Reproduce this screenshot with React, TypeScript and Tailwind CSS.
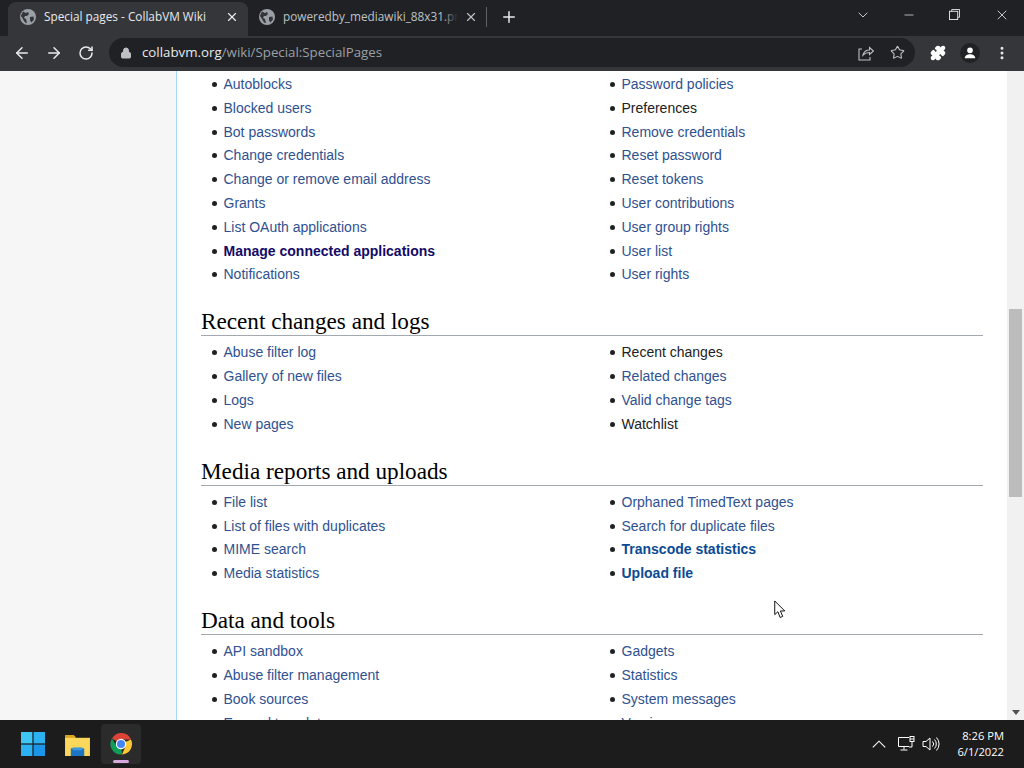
import React from 'react';
import { ArrowLeft, ArrowRight, RotateCw, Lock, Star, ChevronDown, Minus, X, Plus, MoreVertical, Puzzle } from 'lucide-react';

type Item = { label: string; kind?: 'plain' | 'bold' | 'visited' };

const sections: { title?: string; left: Item[]; right: Item[] }[] = [
  {
    left: [
      { label: 'Autoblocks' },
      { label: 'Blocked users' },
      { label: 'Bot passwords' },
      { label: 'Change credentials' },
      { label: 'Change or remove email address' },
      { label: 'Grants' },
      { label: 'List OAuth applications' },
      { label: 'Manage connected applications', kind: 'visited' },
      { label: 'Notifications' },
    ],
    right: [
      { label: 'Password policies' },
      { label: 'Preferences', kind: 'plain' },
      { label: 'Remove credentials' },
      { label: 'Reset password' },
      { label: 'Reset tokens' },
      { label: 'User contributions' },
      { label: 'User group rights' },
      { label: 'User list' },
      { label: 'User rights' },
    ],
  },
  {
    title: 'Recent changes and logs',
    left: [{ label: 'Abuse filter log' }, { label: 'Gallery of new files' }, { label: 'Logs' }, { label: 'New pages' }],
    right: [
      { label: 'Recent changes', kind: 'plain' },
      { label: 'Related changes' },
      { label: 'Valid change tags' },
      { label: 'Watchlist', kind: 'plain' },
    ],
  },
  {
    title: 'Media reports and uploads',
    left: [{ label: 'File list' }, { label: 'List of files with duplicates' }, { label: 'MIME search' }, { label: 'Media statistics' }],
    right: [
      { label: 'Orphaned TimedText pages' },
      { label: 'Search for duplicate files' },
      { label: 'Transcode statistics', kind: 'bold' },
      { label: 'Upload file', kind: 'bold' },
    ],
  },
  {
    title: 'Data and tools',
    left: [{ label: 'API sandbox' }, { label: 'Abuse filter management' }, { label: 'Book sources' }, { label: 'Expand templates' }],
    right: [{ label: 'Gadgets' }, { label: 'Statistics' }, { label: 'System messages' }, { label: 'Version' }],
  },
];

const itemClass = (kind?: Item['kind']) => {
  if (kind === 'plain') return 'text-[#202122]';
  if (kind === 'bold') return 'font-bold text-[#0b4a94]';
  if (kind === 'visited') return 'font-bold text-[#140a66]';
  return 'text-[#2f5190]';
};

const Globe = () => (
  <svg viewBox="0 0 16 16" className="w-4 h-4 shrink-0">
    <circle cx="8" cy="8" r="8" fill="#9aa0a6" />
    <path d="M3 2.5 6 4l2-1 1 2-2 2-2 0-1 2 2 1 1 4-2-.5L2 8.5.8 7zM10 8l3.5-.5.5 3-2.5 3-1.5-2z" fill="#35363a" />
  </svg>
);

const WinLogo = () => (
  <svg viewBox="0 0 24 24" className="w-6 h-6">
    <rect x="0" y="0" width="11.4" height="11.4" fill="#3fc6f5" />
    <rect x="12.6" y="0" width="11.4" height="11.4" fill="#2cb2f0" />
    <rect x="0" y="12.6" width="11.4" height="11.4" fill="#2cb2f0" />
    <rect x="12.6" y="12.6" width="11.4" height="11.4" fill="#1b95e8" />
  </svg>
);

const Folder = () => (
  <svg viewBox="0 0 26 24" className="w-[25px] h-[23px]">
    <path d="M0 2h9l2 2h0v4H0z" fill="#d9a520" />
    <path d="M0 5h26v19H0z" fill="#fbd75b" />
    <rect x="6" y="16" width="14" height="8" fill="#1d74c4" />
    <rect x="8" y="15" width="10" height="3" fill="#3c9be0" />
  </svg>
);

const ChromeLogo = () => (
  <svg viewBox="0 0 48 48" className="w-6 h-6">
    <path d="M24 24 L6 13 A21 21 0 0 1 44 15 L24 15 Z" fill="#db4437" />
    <path d="M24 24 L44 15 A21 21 0 0 1 26 45 L33 29 Z" fill="#fcc934" />
    <path d="M24 24 L26 45 A21 21 0 0 1 6 13 L16 30 Z" fill="#0f9d58" />
    <circle cx="24" cy="24" r="10.5" fill="#ffffff" />
    <circle cx="24" cy="24" r="8" fill="#4285f4" />
  </svg>
);

const ListColumn = ({ items }: { items: Item[] }) => (
  <ul className="flex flex-col">
    {items.map((item) => (
      <li key={item.label} className="flex items-center h-[23.8px] whitespace-nowrap">
        <span className="w-[5px] h-[5px] rounded-full bg-[#202122] ml-[10.5px] mr-[7px] shrink-0" />
        <span className={itemClass(item.kind)}>{item.label}</span>
      </li>
    ))}
  </ul>
);

export default function App() {
  return (
    <div className="w-[1024px] h-[768px] flex flex-col overflow-hidden font-['Liberation_Sans',sans-serif]">
      {/* tab strip */}
      <div className="h-[36px] bg-[#202124] flex items-end pl-[8px] shrink-0 relative font-['Open_Sans',sans-serif] text-[11.8px]">
        <div className="w-[240px] h-[34px] bg-[#35363a] rounded-t-[8px] flex items-center pl-[12px] pr-[9px] pb-[5px] text-[#e8eaed] shrink-0">
          <Globe />
          <span className="ml-[8px] flex-1 whitespace-nowrap">Special pages - CollabVM Wiki</span>
          <X className="w-[14px] h-[14px] text-[#e8eaed]" />
        </div>
        <div className="w-[238px] h-[34px] flex items-center pl-[11px] pr-[8px] pb-[5px] text-[#bdc1c6] shrink-0">
          <Globe />
          <span className="ml-[8px] w-[175px] overflow-hidden whitespace-nowrap relative">
            poweredby_mediawiki_88x31.png
            <span className="absolute right-0 top-0 bottom-0 w-[16px] bg-gradient-to-r from-transparent to-[#202124]" />
          </span>
          <X className="w-[14px] h-[14px] ml-[6px] text-[#bdc1c6]" />
        </div>
        <div className="w-px h-[20px] bg-[#5f6368] mb-[9px]" />
        <Plus className="w-[18px] h-[18px] text-[#e8eaed] ml-[13px] mb-[10px]" />
        <div className="ml-auto flex items-center h-[29px] self-start text-[#e8eaed]">
          <ChevronDown className="w-[16px] h-[16px] mr-[31px]" strokeWidth={1.25} />
          <Minus className="w-[14px] h-[14px] mr-[33px]" strokeWidth={1.25} />
          <svg viewBox="0 0 12 12" className="w-[11px] h-[11px] mr-[34px]" fill="none" stroke="currentColor">
            <rect x="0.5" y="2.5" width="9" height="9" />
            <path d="M3 2.5V.5h8.5V9H9.5" />
          </svg>
          <X className="w-[16px] h-[16px] mr-[14px]" strokeWidth={1.25} />
        </div>
      </div>

      {/* toolbar */}
      <div className="h-[35px] bg-[#35363a] flex items-center pb-[2px] shrink-0 text-[#e8eaed]">
        <ArrowLeft className="w-[18px] h-[18px] ml-[13px]" />
        <ArrowRight className="w-[18px] h-[18px] ml-[14px]" />
        <RotateCw className="w-[16px] h-[16px] ml-[15px]" strokeWidth={2.25} />
        <div className="ml-[15px] w-[806px] h-[29px] rounded-full bg-[#202124] flex items-center pl-[11px] pr-[10px]">
          <Lock className="w-[12px] h-[12px] text-[#bdc1c6]" fill="currentColor" />
          <span className="ml-[10px] text-[13.3px] font-['Open_Sans',sans-serif] whitespace-nowrap">
            collabvm.org<span className="text-[#9aa0a6]">/wiki/Special:SpecialPages</span>
          </span>
          <svg viewBox="0 0 16 16" className="w-[16px] h-[16px] ml-auto text-[#bdc1c6]" fill="none" stroke="currentColor" strokeWidth="1.1">
            <path d="M4 4H1v11h11v-3M5 10c1-3.5 4-5 6.5-5V2.5L15.5 6l-4 3.5V7.5C9 7.5 7 8 5 10z" />
          </svg>
          <Star className="w-[15px] h-[15px] ml-[16px] text-[#bdc1c6]" strokeWidth={1.75} />
        </div>
        <Puzzle className="w-[16px] h-[16px] ml-[15px] text-white" fill="currentColor" />
        <div className="ml-[14px] w-[20px] h-[20px] rounded-full bg-[#202124] flex items-center justify-center">
          <svg viewBox="0 0 16 16" className="w-[14px] h-[14px] text-white" fill="currentColor">
            <circle cx="8" cy="5" r="3.2" />
            <path d="M2 14c0-3 3-4.5 6-4.5s6 1.5 6 4.5z" />
          </svg>
        </div>
        <MoreVertical className="w-[16px] h-[16px] ml-[14px]" strokeWidth={2.5} />
      </div>

      {/* page */}
      <div className="flex-1 flex min-h-0 relative">
        <div className="w-[177px] bg-[#f6f6f6] border-r border-[#a7d7f9] shrink-0" />
        <div className="flex-1 bg-white overflow-hidden pl-[24px] pr-[24px] pt-[1.7px] text-[14px]">
          {sections.map((section, i) => (
            <div key={i}>
              {section.title && (
                <h2 className="h-[54.2px] mb-0 flex items-end">
                  <span className="w-full h-[50px] flex items-end border-b border-[#a2a9b1] mb-[4.8px] font-['Liberation_Serif',serif] text-[23.2px] leading-[28px] text-[#000000]">
                    {section.title}
                  </span>
                </h2>
              )}
              <div className="grid grid-cols-2 gap-x-[14px]">
                <ListColumn items={section.left} />
                <ListColumn items={section.right} />
              </div>
            </div>
          ))}
        </div>
        <div className="w-[17px] bg-[#f1f1f1] shrink-0 flex flex-col items-center justify-end relative pb-[5px]">
          <div className="absolute top-[238px] left-[2px] w-[13px] h-[188px] bg-[#bcbcbc]" />
          <div className="w-0 h-0 border-l-[4px] border-r-[4px] border-t-[5px] border-l-transparent border-r-transparent border-t-[#505050]" />
        </div>
        {/* mouse pointer */}
        <svg viewBox="0 0 14 20" className="absolute left-[774px] top-[529px] w-[13px] h-[19px]" fill="#ffffff" stroke="#000000" strokeWidth="1">
          <path d="M.8.8V15.5L4.2 12.4 6.6 18.6 9.4 17.4 6.9 11.6H11.6Z" />
        </svg>
      </div>

      {/* taskbar */}
      <div className="h-[48px] bg-[#1c1c1c] flex items-center shrink-0 text-white">
        <div className="ml-[21px]"><WinLogo /></div>
        <div className="ml-[20px]"><Folder /></div>
        <div className="ml-[11px] w-[40px] h-[40px] bg-[#2b2b2b] rounded-[4px] flex flex-col items-center justify-center relative">
          <ChromeLogo />
          <div className="absolute bottom-[1px] w-[16px] h-[3px] rounded-full bg-[#d7a9dc]" />
        </div>
        <div className="ml-auto flex items-center">
          <svg viewBox="0 0 14 8" className="w-[14px] h-[8px]" fill="none" stroke="currentColor" strokeWidth="1.1">
            <path d="M.8 7.4 7 1.2l6.2 6.2" />
          </svg>
          <svg viewBox="0 0 18 16" className="w-[18px] h-[16px] ml-[11px]" fill="none" stroke="currentColor">
            <path d="M12 1.5H1.5v9H12M7 10.5v3M3.5 14h7" />
            <rect x="13" y="0.5" width="4" height="5" />
            <path d="M15 5.5V11h-3M13 3h4" />
          </svg>
          <svg viewBox="0 0 18 16" className="w-[18px] h-[16px] ml-[7px]" fill="none" stroke="currentColor">
            <path d="M1 5.5h3L8 2v12L4 10.5H1zM10.5 5.5a3.5 3.5 0 0 1 0 5M12.5 3.5a6.5 6.5 0 0 1 0 9M14.5 1.5a9.5 9.5 0 0 1 0 13" />
          </svg>
          <div className="ml-[9px] mr-[20px] w-[55px] flex flex-col items-end text-[11.2px] leading-[16px] font-['Open_Sans',sans-serif]">
            <span>8:26 PM</span>
            <span>6/1/2022</span>
          </div>
        </div>
      </div>
    </div>
  );
}
